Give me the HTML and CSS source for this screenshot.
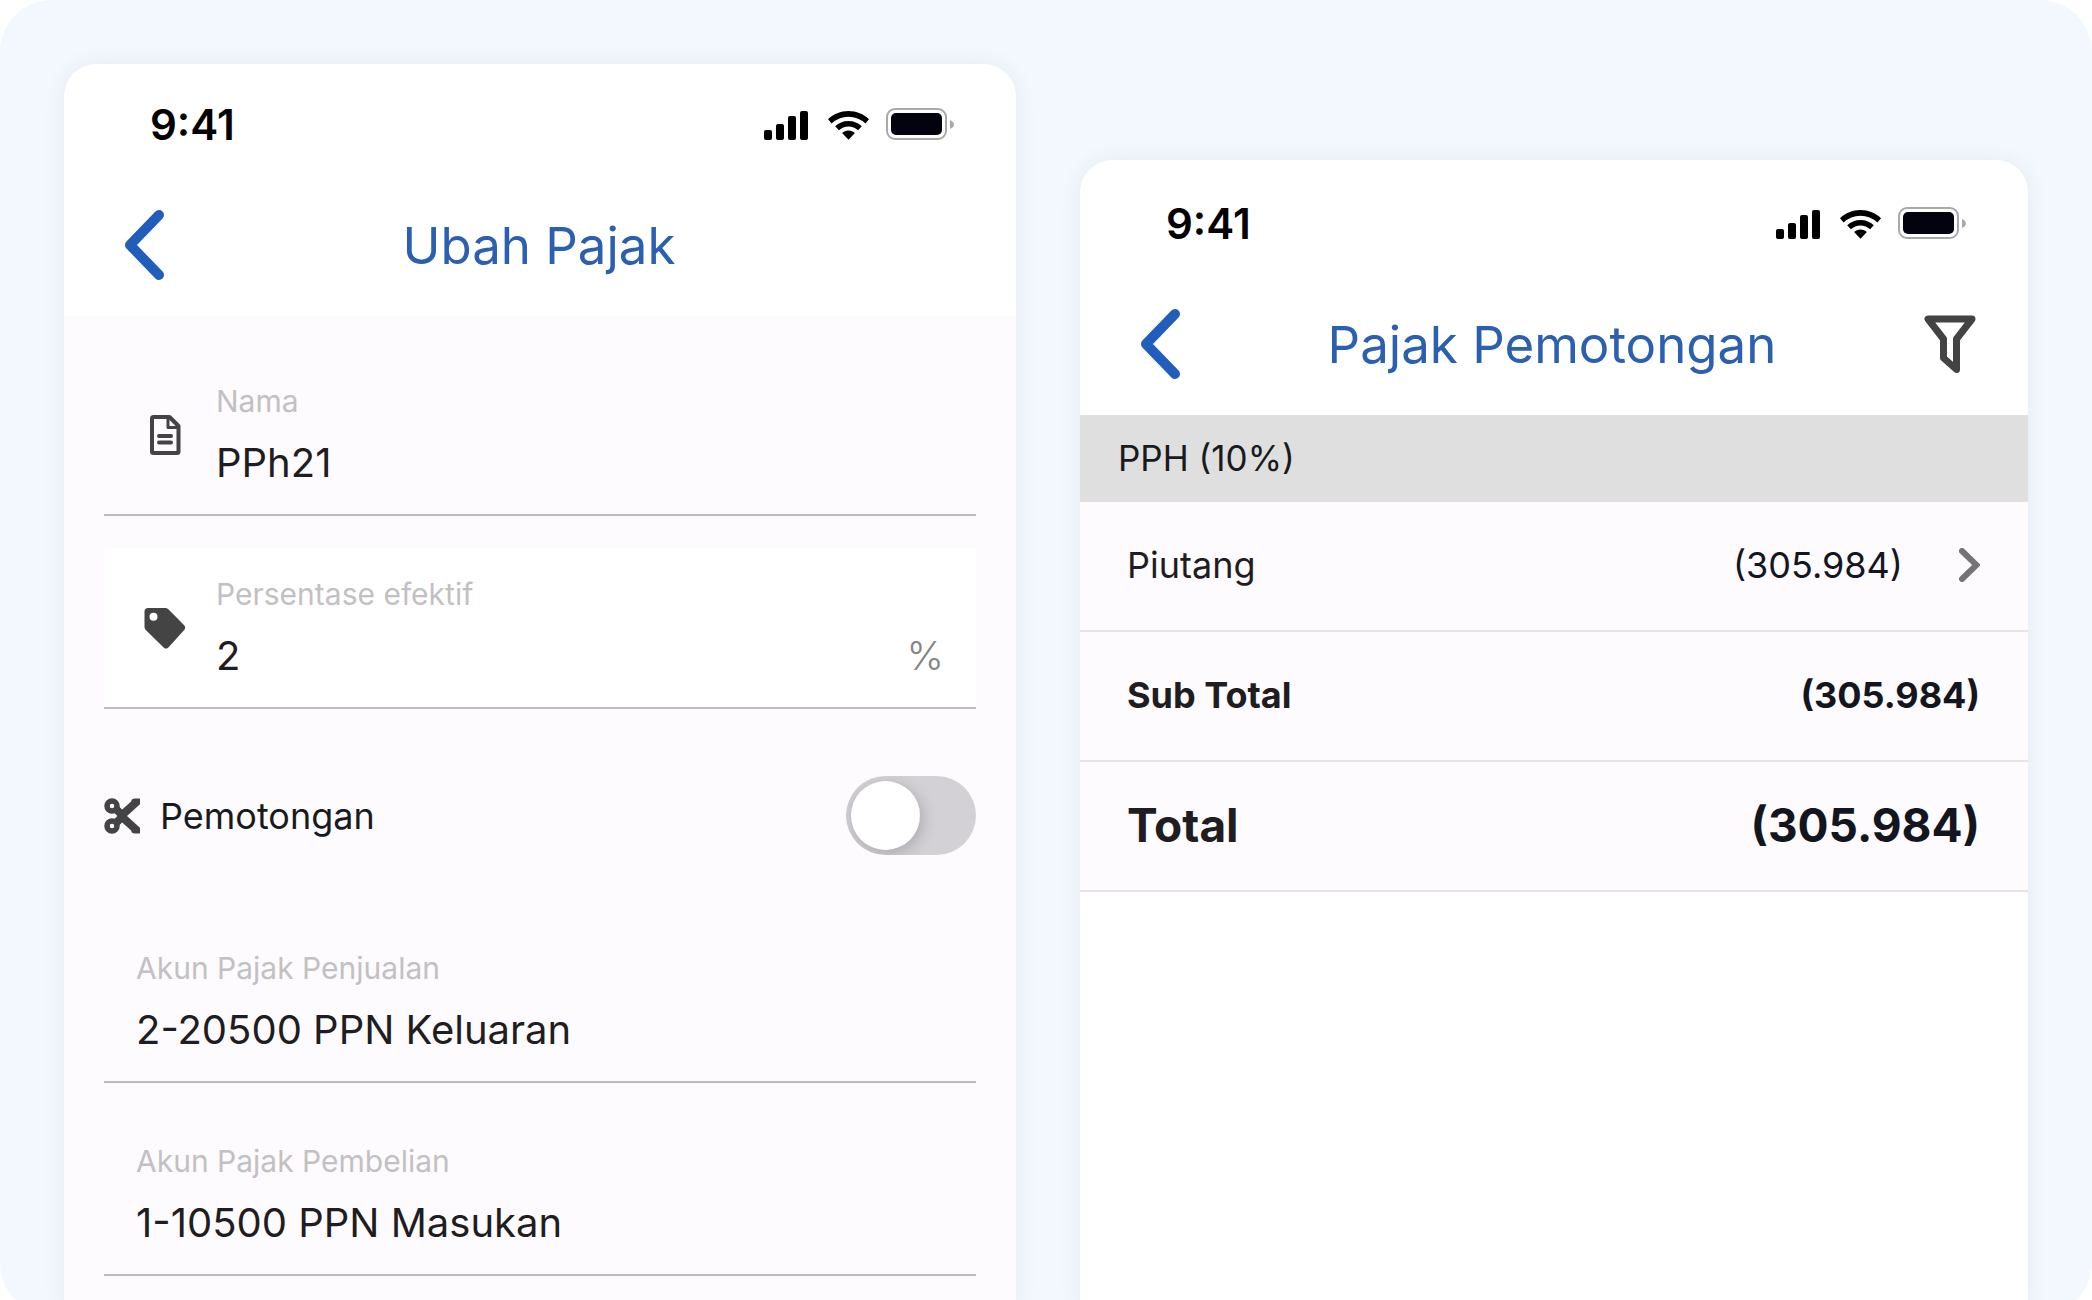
FILE: index.html
```html
<!DOCTYPE html>
<html lang="id">
<head>
    <meta charset="utf-8">
    <title>Pajak</title>
    <link rel="stylesheet" href="styles.css">
</head>
<body>
<svg class="defs" aria-hidden="true">
    <symbol id="status-icons" viewBox="0 0 190 32">
        <rect x="0" y="22" width="8" height="10" rx="2"/>
        <rect x="12" y="16" width="8" height="16" rx="2"/>
        <rect x="24" y="8" width="8" height="24" rx="2"/>
        <rect x="36" y="3" width="8" height="29" rx="2"/>
        <path d="M84.500 3c8 0 15 3 20.500 8.200l-3.600 4.200a24.500 24.500 0 0 0-33.800 0L64 11.200C69.500 6 76.500 3 84.500 3z"/>
        <path d="M84.500 13c5.400 0 9.800 2 13.300 5.300l-3.700 4a14 14 0 0 0-19.200 0l-3.700-4C74.700 15 79.100 13 84.500 13z"/>
        <path d="M84.500 22.500c2.600 0 4.700.9 6.400 2.400l-6.400 6.800-6.400-6.800c1.700-1.500 3.800-2.400 6.400-2.400z"/>
        <rect x="123" y="1" width="59" height="30" rx="8" fill="none" stroke="#a9a9ac" stroke-width="2"/>
        <rect x="127" y="5" width="51" height="22" rx="5" fill="#02030f"/>
        <path d="M186 12c2.600 1.200 4 2.700 4 4.500s-1.400 3.300-4 4.500z" fill="#a9a9ac"/>
    </symbol>
    <symbol id="back" viewBox="0 0 40 70">
        <path d="M35 5L6 35l29 30" fill="none" stroke="#215dbb" stroke-width="10" stroke-linecap="round" stroke-linejoin="round"/>
    </symbol>
</svg>

<main class="stage">
    <section class="phone">
        <div class="status">
            <span>9:41</span>
            <svg width="190" height="32"><use href="#status-icons"/></svg>
        </div>
        <header class="header">
            <button class="icon-btn" type="button" aria-label="Kembali"><svg width="40" height="70"><use href="#back"/></svg></button>
            <h1>Ubah Pajak</h1>
        </header>
        <form class="form">
            <div class="field">
                <svg class="field-icon" width="42" height="42" viewBox="0 0 42 42" fill="none" stroke="#444346" stroke-width="4" stroke-linejoin="round">
                    <path d="M9.500 3h16l9 9v25.500a1.500 1.500 0 0 1-1.500 1.500H9.500A1.500 1.500 0 0 1 8 37.500v-33A1.500 1.500 0 0 1 9.500 3z"/>
                    <path d="M24 3v10.500h10.500" stroke-width="3"/>
                    <path d="M15 22h12M15 28.500h12" stroke-linecap="round"/>
                </svg>
                <div class="field-body">
                    <label for="nama">Nama</label>
                    <input id="nama" type="text" value="PPh21">
                </div>
            </div>
            <div class="field active">
                <svg class="field-icon" width="42" height="42" viewBox="0 0 42 42" fill="#444">
                    <path fill-rule="evenodd" d="M4 1h17c1.500 0 2.600.5 3.600 1.500l15.600 15.700c1.300 1.400 1.300 3.300 0 4.700L24.400 40.600c-1.500 1.400-3.300 1.400-4.800 0L1.800 23C.800 22 .500 21 .500 19.600V4.500C.500 2.300 1.800 1 4 1zm5.500 4.800a4 4 0 1 0 0 8 4 4 0 0 0 0-8z"/>
                </svg>
                <div class="field-body">
                    <label for="persen">Persentase efektif</label>
                    <div class="with-unit">
                        <input id="persen" type="text" value="2">
                        <span class="unit">%</span>
                    </div>
                </div>
            </div>
            <div class="switch-row">
                <label for="pemotongan">
                    <svg width="36" height="36" viewBox="0 0 36 36" fill="none" stroke="#444346">
                        <circle cx="8" cy="8" r="5" stroke-width="5.500"/>
                        <circle cx="8" cy="28" r="5" stroke-width="5.500"/>
                        <path d="M12 11l7 7M12 25l7-7" stroke-width="8"/>
                        <path d="M17 18L32 4.500h-1M17 18l15 13.500h-1" stroke-width="8" stroke-linecap="round"/>
                    </svg>
                    Pemotongan
                </label>
                <input id="pemotongan" class="switch" type="checkbox" role="switch">
            </div>
            <div class="field">
                <div class="field-body">
                    <label for="penjualan">Akun Pajak Penjualan</label>
                    <input id="penjualan" type="text" value="2-20500 PPN Keluaran">
                </div>
            </div>
            <div class="field">
                <div class="field-body">
                    <label for="pembelian">Akun Pajak Pembelian</label>
                    <input id="pembelian" type="text" value="1-10500 PPN Masukan">
                </div>
            </div>
        </form>
    </section>

    <section class="phone report">
        <div class="status">
            <span>9:41</span>
            <svg width="190" height="32"><use href="#status-icons"/></svg>
        </div>
        <header class="header">
            <button class="icon-btn" type="button" aria-label="Kembali"><svg width="40" height="70"><use href="#back"/></svg></button>
            <h1>Pajak Pemotongan</h1>
            <button class="icon-btn" type="button" aria-label="Filter">
                <svg width="52" height="58" viewBox="0 0 52 58">
                    <path d="M4 4h44L32.500 24v30.500L19.500 43V24z" fill="none" stroke="#434343" stroke-width="7" stroke-linejoin="round"/>
                </svg>
            </button>
        </header>
        <h2 class="group">PPH (10%)</h2>
        <table>
            <tbody>
            <tr>
                <th scope="row">Piutang</th>
                <td>
                    <a class="detail" href="#piutang">(305.984)
                        <svg width="21" height="34" viewBox="0 0 21 34">
                            <path d="M3 3l14.500 14L3 31" fill="none" stroke="#757378" stroke-width="6" stroke-linecap="round"/>
                        </svg>
                    </a>
                </td>
            </tr>
            <tr class="subtotal">
                <th scope="row">Sub Total</th>
                <td>(305.984)</td>
            </tr>
            <tr class="total">
                <th scope="row">Total</th>
                <td>(305.984)</td>
            </tr>
            </tbody>
        </table>
    </section>
</main>
</body>
</html>
```
FILE: styles.css
```css
* {
    box-sizing: border-box;
}
body {
    margin: 0;
    background-color: #fff;
    color: #1f1d22;
    font-family: Inter, sans-serif;
    font-size: 36px;
}
h1, h2 {
    margin: 0;
    font-weight: 400;
}
svg {
    display: block;
    flex: none;
}
.defs {
    position: absolute;
    width: 0;
    height: 0;
}
.stage {
    display: grid;
    grid-template-columns: 238fr 237fr;
    gap: 64px;
    min-height: 100vh;
    padding: 64px 64px 0;
    border-radius: 52px;
    background-color: #f3f7fe;
    overflow: hidden;
}
.phone {
    border-radius: 32px 32px 0 0;
    background-color: #fff;
    box-shadow: 0 0 24px rgba(0, 0, 0, 0.06);
    overflow: hidden;
}
.report {
    margin-top: 96px;
    padding-top: 3px;
}

/* Top bars */
.status {
    display: flex;
    align-items: center;
    justify-content: space-between;
    height: 120px;
    padding: 0 62px 0 86px;
    color: #000;
    font-size: 42px;
    font-weight: 600;
}
.header {
    display: flex;
    align-items: center;
    height: 132px;
    padding: 0 52px 10px 60px;
}
.header h1 {
    flex: 1;
    margin-right: 50px;
    color: #2b5fb0;
    font-size: 51px;
    text-align: center;
}
.report .header h1 {
    margin: 0;
}
.icon-btn {
    padding: 0;
    border: none;
    background: none;
    cursor: pointer;
}

/* Form */
.form {
    display: flex;
    flex-direction: column;
    gap: 32px;
    min-height: 100%;
    padding: 39px 40px;
    background-color: #fdfbfe;
}
.field {
    display: flex;
    align-items: center;
    gap: 30px;
    height: 161px;
    padding: 0 32px;
    border-bottom: 2px solid #bdbbbe;
}
.field.active {
    background-color: #fff;
}
.field-icon {
    margin-left: 8px;
}
.field-body {
    flex: 1;
    display: flex;
    flex-direction: column;
    gap: 20px;
}
.field-body label {
    color: #c3c0c4;
    font-size: 30px;
    line-height: 36px;
}
.field-body input {
    width: 100%;
    height: 48px;
    padding: 0;
    border: none;
    outline: none;
    background: none;
    color: inherit;
    font: inherit;
    font-size: 40px;
}
.with-unit {
    display: flex;
    align-items: center;
}
.unit {
    color: #858585;
    font-size: 40px;
    font-weight: 300;
    line-height: 48px;
}
.switch-row {
    display: flex;
    align-items: center;
    justify-content: space-between;
    height: 149px;
}
.switch-row label {
    display: flex;
    align-items: center;
    gap: 20px;
    color: #191a20;
}
.switch {
    appearance: none;
    width: 130px;
    height: 79px;
    margin: 0;
    padding: 5px;
    border-radius: 40px;
    background-color: #d3d1d6;
    overflow: hidden;
    cursor: pointer;
}
.switch::before {
    content: "";
    display: block;
    width: 69px;
    height: 69px;
    border-radius: 50%;
    background-color: #fff;
    box-shadow: 2px 4px 16px rgba(0, 0, 0, 0.2);
}
.switch:checked::before {
    margin-left: auto;
}

/* Report */
.group {
    padding: 0 38px;
    background-color: #dfdfdf;
    color: #191a20;
    font-size: 35px;
    line-height: 87px;
}
table {
    width: 100%;
    border-spacing: 0;
    background-color: #fdfbfe;
}
th, td {
    height: 130px;
    padding: 0 48px 2px;
    border-bottom: 2px solid #e6e4e8;
    font-weight: 400;
}
th {
    padding-left: 47px;
    text-align: left;
}
td {
    color: #14161f;
    text-align: right;
}
.detail {
    display: flex;
    align-items: center;
    justify-content: flex-end;
    gap: 56px;
    color: inherit;
    text-decoration: none;
}
.subtotal th, .subtotal td {
    font-weight: 700;
}
.total th, .total td {
    font-size: 46px;
    font-weight: 700;
}
```
